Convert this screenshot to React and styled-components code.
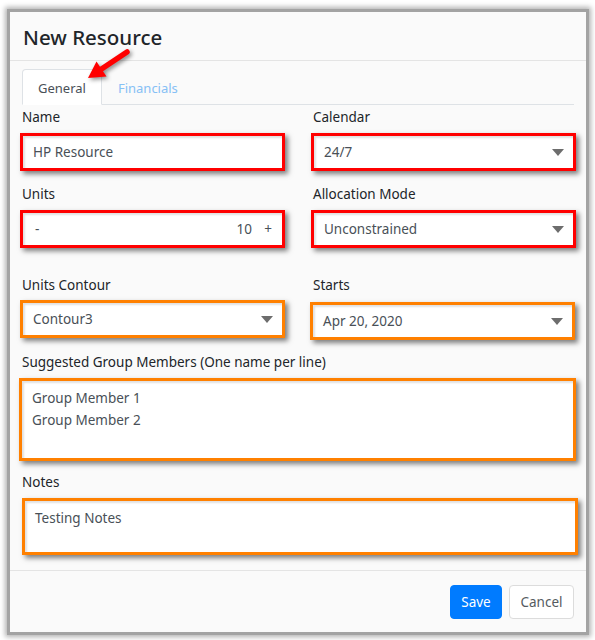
import React from "react";
import styled, { createGlobalStyle } from "styled-components";

const GlobalStyle = createGlobalStyle`
  html, body { margin: 0; padding: 0; background: #ffffff; }
  body { font-family: "Noto Sans", "Open Sans", sans-serif; }
  * { box-sizing: border-box; }
`;

const Page = styled.div`
  width: 595px;
  height: 640px;
  padding: 12px 9px 8px 10px;
`;

const Modal = styled.div`
  position: relative;
  width: 576px;
  height: 620px;
  background: #fafafa;
  display: flex;
  flex-direction: column;
  box-shadow: 0 0 0 3px #a3a3a3, 0 0 5px 5px rgba(0, 0, 0, 0.3);
`;

const Header = styled.div`
  height: 49px;
  padding: 10px 13px 9px;
  border-bottom: 1px solid #e4e4e4;
`;

const Title = styled.h1`
  margin: 0;
  font-size: 20.5px;
  line-height: 30px;
  font-weight: 500;
  color: #212529;
`;

const Body = styled.div`
  flex: 1;
  padding: 8px 12px 0;
`;

const Tabs = styled.div`
  display: flex;
  height: 36px;
  border-bottom: 1px solid #dee2e6;
`;

const Tab = styled.div`
  padding: 0 15px;
  height: 36px;
  line-height: 36px;
  font-size: 13px;
  color: ${(p) => (p.$active ? "#495057" : "#86c0f5")};
  background: ${(p) => (p.$active ? "#ffffff" : "transparent")};
  border: 1px solid ${(p) => (p.$active ? "#dee2e6" : "transparent")};
  border-bottom-color: ${(p) => (p.$active ? "#ffffff" : "transparent")};
  border-radius: 4px 4px 0 0;
  margin-bottom: -1px;
`;

const Row = styled.div`
  display: grid;
  grid-template-columns: ${(p) => (p.$full ? "1fr" : "1fr 1fr")};
  column-gap: 30px;
  margin-top: ${(p) => p.$top}px;
`;

const Field = styled.div`
  display: flex;
  flex-direction: column;
`;

const Label = styled.label`
  font-size: 13.5px;
  line-height: 21px;
  color: #212529;
  margin-bottom: 5px;
`;

const Highlight = styled.div`
  height: ${(p) => p.$h}px;
  margin: ${(p) => p.$margin || "0 -2px"};
  border: 3px solid ${(p) => (p.$color === "red" ? "#ff0000" : "#ff8000")};
  background: #ffffff;
  box-shadow: 3px 3px 5px rgba(0, 0, 0, 0.5), inset 2px 2px 2px rgba(0, 0, 0, 0.12);
  display: flex;
  align-items: ${(p) => (p.$multi ? "flex-start" : "center")};
  padding: ${(p) => (p.$multi ? "6px 10px" : "0 10px")};
  font-size: 13.5px;
  color: #495057;
`;

const Value = styled.span`
  flex: 1;
`;

const Lines = styled.div`
  line-height: 22px;
`;

const Caret = styled.svg`
  width: 12px;
  height: 7px;
  flex: none;
  margin-right: -1px;
`;

const Stepper = styled.span`
  flex: 1;
  display: flex;
  align-items: center;
`;

const StepSign = styled.span`
  width: ${(p) => (p.$plus ? "20px" : "auto")};
  text-align: right;
  padding-left: ${(p) => (p.$plus ? "0" : "2px")};
`;

const Number = styled.span`
  flex: 1;
  text-align: right;
`;

const Footer = styled.div`
  height: 62px;
  border-top: 1px solid #e4e4e4;
  display: flex;
  justify-content: flex-end;
  align-items: flex-start;
  gap: 7px;
  padding: 14px 12px 0;
`;

const Button = styled.button`
  height: 34px;
  width: ${(p) => (p.$primary ? "52px" : "65px")};
  padding: 0;
  font-family: inherit;
  font-size: 13.5px;
  border-radius: 4px;
  border: 1px solid ${(p) => (p.$primary ? "#007bff" : "#dcdcdc")};
  background: ${(p) => (p.$primary ? "#007bff" : "#ffffff")};
  color: ${(p) => (p.$primary ? "#ffffff" : "#555b61")};
`;

const Arrow = styled.svg`
  position: absolute;
  left: 0;
  top: 0;
  width: 150px;
  height: 90px;
  pointer-events: none;
  filter: drop-shadow(2px 2px 2px rgba(0, 0, 0, 0.45));
`;

const Down = () => (
  <Caret viewBox="0 0 12 7">
    <path d="M0 0 L12 0 L6 7 Z" fill="#6d6d6d" />
  </Caret>
);

export default function App() {
  return (
    <Page>
      <GlobalStyle />
      <Modal>
        <Header>
          <Title>New Resource</Title>
        </Header>
        <Body>
          <Tabs>
            <Tab $active>General</Tab>
            <Tab>Financials</Tab>
          </Tabs>
          <Row $top={2}>
            <Field>
              <Label>Name</Label>
              <Highlight $h={38} $color="red">
                <Value>HP Resource</Value>
              </Highlight>
            </Field>
            <Field>
              <Label>Calendar</Label>
              <Highlight $h={38} $color="red">
                <Value>24/7</Value>
                <Down />
              </Highlight>
            </Field>
          </Row>
          <Row $top={13}>
            <Field>
              <Label>Units</Label>
              <Highlight $h={38} $color="red">
                <Stepper>
                  <StepSign>-</StepSign>
                  <Number>10</Number>
                  <StepSign $plus>+</StepSign>
                </Stepper>
              </Highlight>
            </Field>
            <Field>
              <Label>Allocation Mode</Label>
              <Highlight $h={38} $color="red">
                <Value>Unconstrained</Value>
                <Down />
              </Highlight>
            </Field>
          </Row>
          <Row $top={27}>
            <Field>
              <Label>Units Contour</Label>
              <Highlight $h={38} $color="orange" $margin="-1px -2px 0">
                <Value>Contour3</Value>
                <Down />
              </Highlight>
            </Field>
            <Field>
              <Label>Starts</Label>
              <Highlight $h={38} $color="orange" $margin="1px -1px 0 -3px">
                <Value>Apr 20, 2020</Value>
                <Down />
              </Highlight>
            </Field>
          </Row>
          <Row $full $top={12}>
            <Field>
              <Label>Suggested Group Members (One name per line)</Label>
              <Highlight $h={83} $color="orange" $multi $margin="0 -2px 0 -3px">
                <Lines>
                  Group Member 1
                  <br />
                  Group Member 2
                </Lines>
              </Highlight>
            </Field>
          </Row>
          <Row $full $top={11}>
            <Field>
              <Label>Notes</Label>
              <Highlight $h={57} $color="orange" $multi $margin="0 -4px 0 0">
                <Lines>Testing Notes</Lines>
              </Highlight>
            </Field>
          </Row>
        </Body>
        <Footer>
          <Button $primary>Save</Button>
          <Button>Cancel</Button>
        </Footer>
        <Arrow viewBox="0 0 150 90">
          <line x1="117" y1="40" x2="90" y2="58" stroke="#ff0000" strokeWidth="5.5" strokeLinecap="round" />
          <polygon points="78,66 96.5,64.5 86.5,49.5" fill="#ff0000" />
        </Arrow>
      </Modal>
    </Page>
  );
}
